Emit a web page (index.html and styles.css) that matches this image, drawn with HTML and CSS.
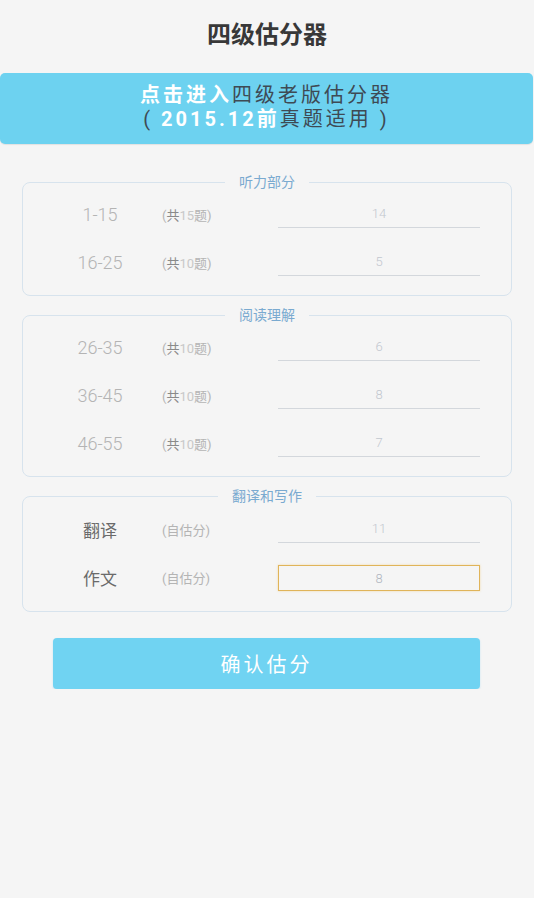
FILE: index.html
```html
<!DOCTYPE html>
<html lang="zh-CN">
<head>
    <meta charset="UTF-8">
    <meta name="viewport" content="width=device-width, initial-scale=1.0">
    <title>四级估分器</title>
    <link rel="stylesheet" href="styles.css">
</head>
<body>
    <header class="top-title">四级估分器</header>

    <a class="old-banner" href="#">
        <span class="hl">点击进入</span>四级老版估分器<br>
        ( <span class="hl">2015.12前</span>真题适用 )
    </a>

    <form class="score-form">
        <fieldset class="part">
            <legend>听力部分</legend>
            <div class="row">
                <span class="range">1-15</span>
                <span class="note">(<b>共</b><i>15</i>题)</span>
                <input class="score" type="text" value="14">
            </div>
            <div class="row">
                <span class="range">16-25</span>
                <span class="note">(<b>共</b><i>10</i>题)</span>
                <input class="score" type="text" value="5">
            </div>
        </fieldset>

        <fieldset class="part">
            <legend>阅读理解</legend>
            <div class="row">
                <span class="range">26-35</span>
                <span class="note">(<b>共</b><i>10</i>题)</span>
                <input class="score" type="text" value="6">
            </div>
            <div class="row">
                <span class="range">36-45</span>
                <span class="note">(<b>共</b><i>10</i>题)</span>
                <input class="score" type="text" value="8">
            </div>
            <div class="row">
                <span class="range">46-55</span>
                <span class="note">(<b>共</b><i>10</i>题)</span>
                <input class="score" type="text" value="7">
            </div>
        </fieldset>

        <fieldset class="part last">
            <legend>翻译和写作</legend>
            <div class="row">
                <span class="range cn">翻译</span>
                <span class="note">(自估分)</span>
                <input class="score" type="text" value="11">
            </div>
            <div class="row">
                <span class="range cn">作文</span>
                <span class="note">(自估分)</span>
                <input class="score active" type="text" value="8" autofocus>
            </div>
        </fieldset>

        <button class="confirm-btn" type="button">确认估分</button>
    </form>
</body>
</html>
```

FILE: styles.css
```css
body {
    margin: 0;
    padding: 0;
    background: #f5f5f5;
    font-family: Roboto, "Noto Sans CJK SC", sans-serif;
    color: #333;
}

.top-title {
    height: 70px;
    line-height: 70px;
    text-align: center;
    font-size: 24px;
    font-weight: bold;
    color: #383838;
}

.old-banner {
    display: block;
    margin: 3px 1px 0 0;
    padding: 10px 0 13px;
    background: #6dd2f0;
    border-radius: 5px;
    box-shadow: 0 1px 1px rgba(0, 0, 0, 0.08);
    text-align: center;
    font-size: 20px;
    line-height: 24px;
    letter-spacing: 3px;
    color: #3e4a54;
    text-decoration: none;
}

.old-banner .hl {
    color: #ffffff;
    font-weight: bold;
}

.score-form {
    margin-top: 28px;
}

.part {
    margin: 0 22px 9px;
    padding: 0 0 11px;
    border: 1px solid #d7e3ed;
    border-radius: 8px;
    min-width: 0;
}

.part.last legend + .row {
    margin-top: 1px;
}

.part.last {
    padding-bottom: 12px;
}

.part legend {
    margin: 0 auto;
    padding: 0 14px;
    font-size: 14px;
    line-height: 20px;
    color: #7aaad0;
}

.row {
    display: grid;
    grid-template-columns: 74px 91px 202px;
    column-gap: 25px;
    align-items: center;
    height: 44px;
    margin-top: 4px;
    padding-left: 40px;
}

.part legend + .row {
    margin-top: 0;
}

.range {
    text-align: center;
    font-size: 18px;
    font-weight: 300;
    color: #b4b4b4;
}

.range.cn {
    font-size: 17px;
    font-weight: normal;
    color: #6a6a6a;
}

.note {
    font-size: 13px;
    color: #b4b4b4;
}

.note b {
    font-weight: normal;
    color: #8a8a8a;
}

.note i {
    font-style: normal;
    color: #c8c8c8;
}

.score {
    box-sizing: border-box;
    width: 202px;
    height: 28px;
    padding: 0;
    border: none;
    border-bottom: 1px solid #d3d7dc;
    background: transparent;
    text-align: center;
    font-family: Roboto, sans-serif;
    font-size: 13px;
    font-weight: 300;
    color: #c2c7cf;
    outline: none;
    caret-color: #4a5a6a;
}

.score.active {
    height: 26px;
    margin-top: 2px;
    border: 1px solid #e0b45a;
    box-shadow: 0 0 2px rgba(240, 200, 110, 0.6);
    color: #b0b6c0;
}

.confirm-btn {
    display: block;
    width: 427px;
    height: 51px;
    margin: 26px 0 0 53px;
    border: none;
    border-radius: 4px;
    background: #70d3f2;
    box-shadow: 0 1px 2px rgba(120, 200, 240, 0.4);
    font-family: Roboto, "Noto Sans CJK SC", sans-serif;
    font-size: 20px;
    letter-spacing: 3px;
    color: #ffffff;
    cursor: pointer;
}
```
